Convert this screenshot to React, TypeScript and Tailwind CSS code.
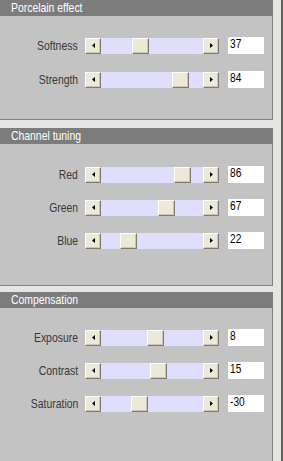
const font = { fontFamily: '"Liberation Sans", Arial, sans-serif' }

type Row = { label: string; value: number; min: number; max: number }

const sections: { title: string; rows: Row[]; body: string; gap: string }[] = [
  {
    title: 'Porcelain effect',
    body: 'h-[104px] pt-[21px]',
    gap: 'gap-[17px]',
    rows: [
      { label: 'Softness', value: 37, min: 0, max: 100 },
      { label: 'Strength', value: 84, min: 0, max: 100 },
    ],
  },
  {
    title: 'Channel tuning',
    body: 'h-[142px] pt-[22px]',
    gap: 'gap-[16px]',
    rows: [
      { label: 'Red', value: 86, min: 0, max: 100 },
      { label: 'Green', value: 67, min: 0, max: 100 },
      { label: 'Blue', value: 22, min: 0, max: 100 },
    ],
  },
  {
    title: 'Compensation',
    body: 'flex-1 pt-[21px]',
    gap: 'gap-[16px]',
    rows: [
      { label: 'Exposure', value: 8, min: -100, max: 100 },
      { label: 'Contrast', value: 15, min: -100, max: 100 },
      { label: 'Saturation', value: -30, min: -100, max: 100 },
    ],
  },
]

function Arrow({ dir }: { dir: 'left' | 'right' }) {
  return (
    <svg width="3" height="5" viewBox="0 0 3 5">
      {dir === 'left' ? <path d="M3 0v5L0 2.5z" fill="#000" /> : <path d="M0 0v5l3-2.5z" fill="#000" />}
    </svg>
  )
}

const bevel =
  'bg-[#ece9d8] border border-t-[#fdfdfb] border-l-[#fdfdfb] border-b-[#7d7b70] border-r-[#7d7b70] shadow-[inset_-1px_-1px_0_#c9c6b8]'

function Slider({ value, min, max }: { value: number; min: number; max: number }) {
  const pos = ((value - min) / (max - min)) * 85
  return (
    <div className="flex h-[16px] w-[134px]">
      <div className={`flex h-full w-[16px] items-center justify-center ${bevel}`}>
        <Arrow dir="left" />
      </div>
      <div className="relative h-full flex-1 bg-[#dfdffd]">
        <div className={`absolute top-0 h-[16px] w-[17px] ${bevel}`} style={{ left: pos }} />
      </div>
      <div className={`flex h-full w-[16px] items-center justify-center ${bevel}`}>
        <Arrow dir="right" />
      </div>
    </div>
  )
}

export default function App() {
  return (
    <div className="flex h-[461px] w-[283px] overflow-hidden bg-[#e4e4e4]" style={font}>
      <div className="flex w-[273px] flex-col">
        {sections.map((s, i) => (
          <div
            key={s.title}
            className={`flex flex-col ${i === 0 ? '' : i === 1 ? 'mt-[8px]' : 'mt-[6px] flex-1'}`}
          >
            <div className="h-[16px] whitespace-nowrap bg-[#7c7c7c] pl-[11px] text-[13px] leading-[16px] text-white">
              <span className="inline-block origin-left scale-x-[0.8]">{s.title}</span>
            </div>
            <div
              className={`flex flex-col border-r border-r-[#808080] bg-[#c3c3c3] ${
                i < 2 ? 'border-b border-b-[#858585]' : ''
              } ${s.body} ${s.gap}`}
            >
              {s.rows.map((r) => (
                <div key={r.label} className="flex h-[17px] items-center">
                  <div className="w-[78px] whitespace-nowrap text-right text-[13px] leading-[17px] text-[#383838]">
                    <span className="inline-block origin-right scale-x-[0.8]">{r.label}</span>
                  </div>
                  <div className="ml-[7px]">
                    <Slider value={r.value} min={r.min} max={r.max} />
                  </div>
                  <div className="ml-[9px] h-[17px] w-[36px] whitespace-nowrap bg-white pl-[2px] text-[13px] leading-[14px] text-black">
                    <span className="inline-block origin-left scale-x-[0.78]">{r.value}</span>
                  </div>
                </div>
              ))}
            </div>
          </div>
        ))}
      </div>
      <div className="w-[8px]" />
      <div className="w-[2px] bg-[#5b614f]" />
    </div>
  )
}
